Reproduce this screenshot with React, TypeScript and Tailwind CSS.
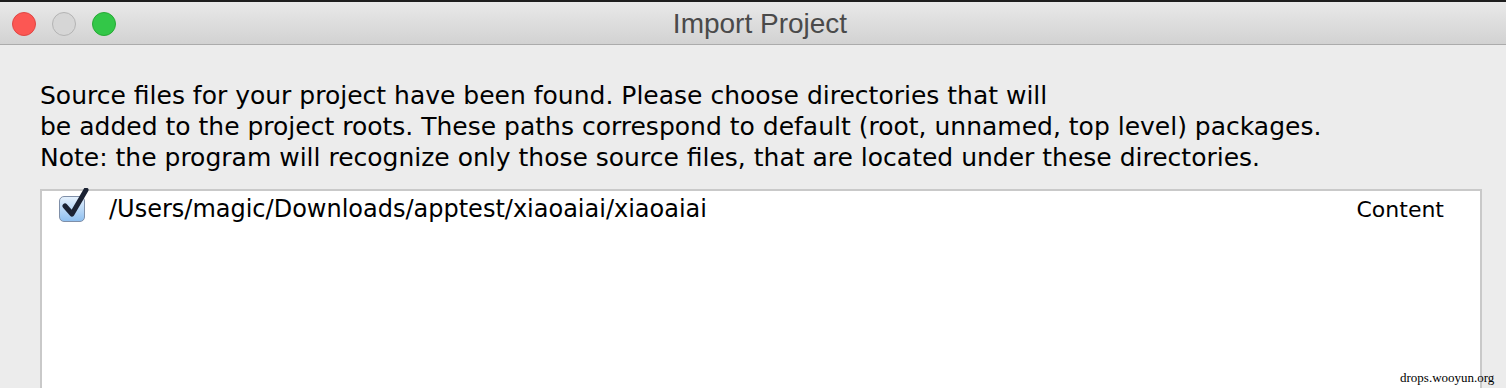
import React from "react";

export default function App() {
  return (
    <div className="w-[1506px] h-[388px] overflow-hidden bg-[#ececec] flex flex-col" style={{ fontFamily: '"DejaVu Sans", sans-serif' }}>
      <div className="h-[2px] bg-[#1e1e1e] shrink-0" />
      <div className="relative h-[43px] shrink-0 bg-gradient-to-b from-[#e9e9e9] to-[#d2d2d2] border-b border-[#ababab] flex items-center">
        <div className="flex items-center gap-[16px] pl-[12px] pt-[1px]">
          <div className="w-[24px] h-[24px] rounded-full bg-[#fc5753] border border-[#df4744]" />
          <div className="w-[24px] h-[24px] rounded-full bg-[#d6d6d6] border border-[#b4b4b4]" />
          <div className="w-[24px] h-[24px] rounded-full bg-[#33c748] border border-[#27aa35]" />
        </div>
        <div className="absolute inset-0 flex items-center justify-center pl-[14px] pt-[2px] text-[28px] text-[#4a4a4a]" style={{ fontFamily: '"Liberation Sans", Arial, sans-serif' }}>
          Import Project
        </div>
      </div>
      <div className="pl-[40px] pt-[35px] text-[25px] leading-[31px] text-black">
        <div>Source files for your project have been found. Please choose directories that will</div>
        <div>be added to the project roots. These paths correspond to default (root, unnamed, top level) packages.</div>
        <div>Note: the program will recognize only those source files, that are located under these directories.</div>
      </div>
      <div className="relative ml-[40px] mr-[24px] mt-[16px] flex-1 bg-white border-2 border-b-0 border-[#c9c9c9]">
        <div className="flex items-center h-[36px] pl-[17px] pr-[36px]">
          <div className="relative w-[26px] h-[26px] rounded-[5px] border border-[#7f8fa8] bg-gradient-to-b from-[#e4f0fc] to-[#8fc0f0] shrink-0">
            <svg className="absolute left-[2px] top-[-9px]" width="28" height="32" viewBox="0 0 28 32">
              <path d="M3 18 L10 26 L24 2" fill="none" stroke="#1b2233" strokeWidth="5" strokeLinecap="round" strokeLinejoin="round" />
            </svg>
          </div>
          <div className="ml-[24px] text-[24px] text-black flex-1">/Users/magic/Downloads/apptest/xiaoaiai/xiaoaiai</div>
          <div className="text-[22px] text-black">Content</div>
        </div>
      </div>
      <div className="absolute left-[1400px] top-[368px] text-[13px] text-black" style={{ fontFamily: '"Liberation Serif", serif' }}>drops.wooyun.org</div>
    </div>
  );
}
